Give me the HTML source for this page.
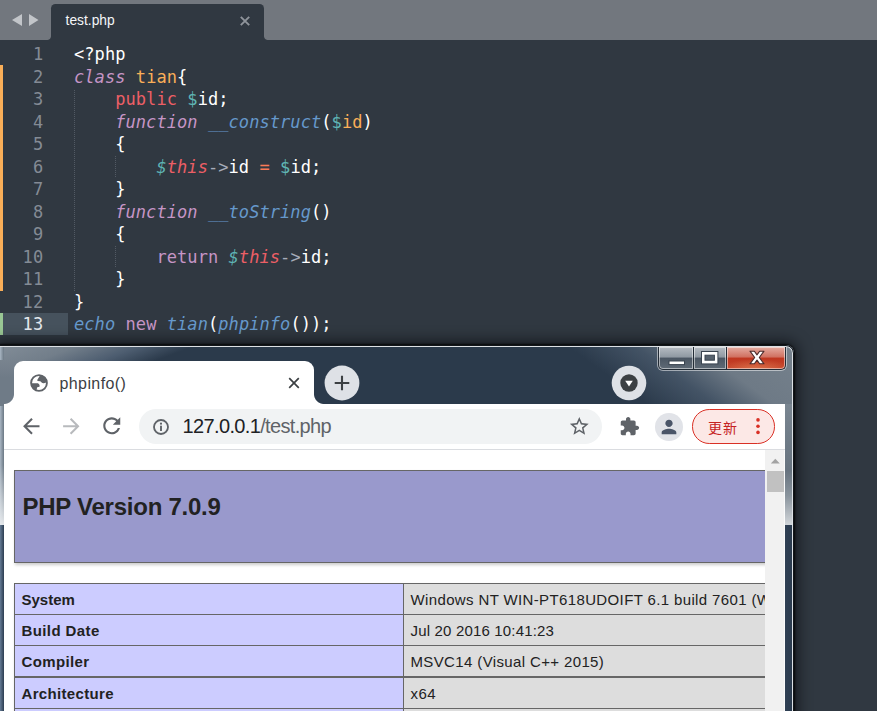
<!DOCTYPE html>
<html lang="zh">
<head>
<meta charset="utf-8">
<title>test.php</title>
<style>
*{box-sizing:border-box;margin:0;padding:0}
html,body{width:877px;height:711px;overflow:hidden;background:#303841}
body{position:relative;font-family:"Liberation Sans","Noto Sans CJK SC",sans-serif}
.abs{position:absolute}
/* ---------- editor ---------- */
#tabbar{position:absolute;left:0;top:0;width:877px;height:40px;background:#72777e}
#etab{position:absolute;left:51px;top:4px;width:213px;height:36px;background:#303841;border-radius:4.5px 4.5px 0 0}
#etab:before,#etab:after{content:"";position:absolute;bottom:0;width:4px;height:4px}
#etab:before{left:-4px;background:radial-gradient(circle at 0 0,rgba(48,56,65,0) 3.5px,#303841 4.5px)}
#etab:after{right:-4px;background:radial-gradient(circle at 100% 0,rgba(48,56,65,0) 3.5px,#303841 4.5px)}
#etab .t{position:absolute;left:14.6px;top:8.5px;font-size:13.8px;color:#f4f6f8;white-space:nowrap}
#code{position:absolute;left:0;top:43.3px;width:877px;font-family:"DejaVu Sans Mono","Liberation Mono",monospace;font-size:17px;letter-spacing:0.066px;color:#d8dee9}
.ln{position:relative;height:22.5px;line-height:22.5px;white-space:pre}
.ln .n{position:absolute;left:0;width:43.2px;text-align:right;color:#848b95}
.ln .c{position:absolute;left:74px}
.ln i{font-style:italic}
.k{color:#c695c6}.r{color:#ec5f66}.g{color:#5fb4b4}.o{color:#f9ae58}.b{color:#6699cc}.p{color:#d8dee9}.w{color:#ffffff}.m{color:#a6acb9}.op{color:#f97b58}
.guide{position:absolute;width:1px;background-image:linear-gradient(#525a64 50%,transparent 50%);background-size:1px 2px}
/* ---------- browser window ---------- */

#win{position:absolute;left:0;top:345px;width:794px;height:380px;border-radius:0 8px 0 0;overflow:hidden;box-shadow:0 0 2px 1px rgba(0,0,0,.8),0 0 14px 4px rgba(6,8,12,.62);
 background:
  linear-gradient(36deg,rgba(43,58,75,0) 0,rgba(43,58,75,0) 640px,rgba(70,86,104,.9) 680px,rgba(110,122,134,1) 715px,rgba(118,130,141,1) 780px) no-repeat,
  linear-gradient(159.6deg,#828d98 0,#727e8a 28px,#4d5d70 50px,#2b3a4b 69px);
}
#topline{position:absolute;left:-10px;top:0;width:804px;height:400px;border:1px solid #12161b;border-radius:0 8px 0 0;box-shadow:inset 0 0 0 1px #dde1e5;z-index:5}
#frameL{position:absolute;left:0;top:0;width:4px;height:380px;background:linear-gradient(90deg,#a9b6c3,#6b7884)}
#frameL2{position:absolute;left:0;top:120px;width:4px;height:60px;background:linear-gradient(rgba(230,233,236,0),rgba(233,236,239,.95))}
#frameL3{position:absolute;left:0;top:180px;width:4px;height:200px;background:linear-gradient(90deg,#657b95,#2c3d51)}
#frameR{position:absolute;left:785px;top:59px;width:8px;height:121px;background:linear-gradient(#7a8691 0,#67737f 55%,#8a949d 76%,#d2d6da 100%)}
#frameR3{position:absolute;left:785px;top:180px;width:8px;height:200px;background:linear-gradient(90deg,#2f4054,#2b3b4e)}
#btab{position:absolute;left:14px;top:16px;width:300px;height:43px;background:#fff;border-radius:9px 9px 0 0}
#btab:before,#btab:after{content:"";position:absolute;bottom:0;width:10px;height:10px}
#btab:before{left:-10px;background:radial-gradient(circle at 0 0,rgba(255,255,255,0) 9.5px,#fff 10.5px)}
#btab:after{right:-10px;background:radial-gradient(circle at 100% 0,rgba(255,255,255,0) 9.5px,#fff 10.5px)}
#btab .t{position:absolute;left:45.5px;top:13px;font-size:16px;letter-spacing:.4px;color:#3c4043;white-space:nowrap;line-height:20px}
#toolbar{position:absolute;left:4px;top:59px;width:781px;height:46px;background:#fff;border-bottom:1px solid #dadce0}
#omni{position:absolute;left:135px;top:5px;width:463px;height:34.5px;border-radius:17.25px;background:#f1f3f4}
#url{position:absolute;left:43.6px;top:6.2px;font-size:20px;letter-spacing:-.65px;line-height:22px;color:#5f6368;white-space:nowrap}
#url b{font-weight:normal;color:#202124}
#upd{position:absolute;left:688px;top:5px;width:83px;height:34.5px;border-radius:17.25px;background:#fce8e6;border:1.5px solid #d93025}
#upd .t{position:absolute;left:15px;top:7.8px;font-size:14px;letter-spacing:1px;line-height:20px;color:#c5221f;font-family:"Liberation Sans","Noto Sans CJK SC",sans-serif;white-space:nowrap}
#page{position:absolute;left:4px;top:105px;width:761px;height:280px;background:#fff;overflow:hidden}
#sbar{position:absolute;left:765px;top:105px;width:20px;height:280px;background:#f1f1f1;border-right:1px solid #fbfbfb}
#sbar .th{position:absolute;left:2px;top:21px;width:17px;height:21px;background:#c1c1c1}
#hdr{position:absolute;left:10px;top:20px;width:760px;height:92.6px;background:#99c;border:1px solid #666;box-shadow:1px 2px 3px #ccc}
#hdr h1{position:absolute;left:7.5px;top:21px;font-size:24px;line-height:30px;font-weight:bold;color:#222;letter-spacing:-.25px;white-space:nowrap}
#tbl{position:absolute;left:10px;top:133px;width:760px;height:160px;background:#666;box-shadow:1px 2px 3px #ccc}
.row{position:absolute;left:1px;width:760px}
.row .e{position:absolute;left:0;top:0;width:388px;height:100%;background:#ccf;font-weight:bold}
.row .v{position:absolute;left:389px;top:0;width:380px;height:100%;background:#ddd}
.row span{position:absolute;left:6.5px;top:5.8px;font-size:15px;line-height:20px;color:#222;white-space:nowrap}

#cap{position:absolute;left:657px;top:2px;width:130px;height:24px;background:rgba(255,255,255,.5);border-radius:0 0 6px 6px}
.cb{position:absolute;top:0;height:23px;border:1px solid #232c36;border-top:none;box-shadow:inset 0 0 0 1px rgba(255,255,255,.5);
 background:linear-gradient(#b6bcc3 0,#8f98a2 46%,#4b5663 50%,#5f6a76 100%)}
.cb.cx{background:radial-gradient(ellipse 60% 45% at 50% 100%,rgba(236,150,100,.55),rgba(236,150,100,0)),linear-gradient(#e5aca2 0,#d0705f 46%,#bf3720 50%,#c5442b 100%)}
</style>
</head>
<body>
<div id="tabbar">
  <svg class="abs" style="left:0;top:0" width="51" height="40"><path d="M12 20 L22 14 V26Z M38.5 20 L29 14 V26Z" fill="#c2c5c9"/></svg>
  <div id="etab"><span class="t">test.php</span>
    <svg class="abs" style="left:188.5px;top:11.5px" width="10" height="10"><path d="M0.8 0.8L9.2 9.2M9.2 0.8L0.8 9.2" stroke="#8f949b" stroke-width="1.9" fill="none"/></svg>
  </div>
</div>
<div class="abs" style="left:0;top:65px;width:3px;height:226px;background:#f9ae58"></div>
<div class="abs" style="left:0;top:313px;width:3px;height:22px;background:#99c794"></div>
<div class="abs" style="left:3px;top:313px;width:65px;height:22px;background:#46525d"></div>
<div class="guide" style="left:74px;top:90px;height:201px"></div>
<div class="guide" style="left:115px;top:156px;height:22px"></div>
<div class="guide" style="left:115px;top:246px;height:22px"></div>
<div id="code">
<div class="ln"><span class="n">1</span><span class="c w">&lt;?php</span></div>
<div class="ln"><span class="n">2</span><span class="c"><i class="k">class</i> <span class="o">tian</span><span class="w">{</span></span></div>
<div class="ln"><span class="n">3</span><span class="c">    <span class="r">public</span> <span class="g">$</span><span class="w">id;</span></span></div>
<div class="ln"><span class="n">4</span><span class="c">    <i class="k">function</i> <i class="b">__construct</i><span class="w">(</span><span class="g">$</span><span class="o">id</span><span class="w">)</span></span></div>
<div class="ln"><span class="n">5</span><span class="c w">    {</span></div>
<div class="ln"><span class="n">6</span><span class="c">        <i class="g">$</i><i class="r">this</i><span class="m">-&gt;</span><span class="w">id</span> <span class="op">=</span> <span class="g">$</span><span class="w">id;</span></span></div>
<div class="ln"><span class="n">7</span><span class="c w">    }</span></div>
<div class="ln"><span class="n">8</span><span class="c">    <i class="k">function</i> <i class="b">__toString</i><span class="w">()</span></span></div>
<div class="ln"><span class="n">9</span><span class="c w">    {</span></div>
<div class="ln"><span class="n">10</span><span class="c">        <span class="k">return</span> <i class="g">$</i><i class="r">this</i><span class="m">-&gt;</span><span class="w">id;</span></span></div>
<div class="ln"><span class="n">11</span><span class="c w">    }</span></div>
<div class="ln"><span class="n">12</span><span class="c w">}</span></div>
<div class="ln"><span class="n" style="color:#e4e8ee">13</span><span class="c"><i class="b">echo</i> <span class="k">new</span> <i class="b">tian</i><span class="w">(</span><i class="b">phpinfo</i><span class="w">());</span></span></div>
</div>
<div id="win">
  <div id="topline"></div><div id="frameL"></div><div id="frameL2"></div><div id="frameL3"></div><div id="frameR"></div><div id="frameR3"></div>
  <div id="cap">
    <div class="cb" style="left:1px;width:36px;border-radius:0 0 0 5px"><svg class="abs" style="left:9px;top:13px" width="18" height="6"><rect x="1" y="1" width="15.5" height="3.6" fill="#fff" stroke="#3a4450" stroke-width="1"/></svg></div>
    <div class="cb" style="left:36px;width:34px"><svg class="abs" style="left:5.5px;top:3px" width="20" height="17"><rect x="1" y="1" width="17.4" height="13.4" fill="#3a4450"/><rect x="2" y="2" width="15.4" height="11.4" fill="#fff"/><rect x="5" y="5.2" width="9.4" height="5" fill="#56616d" stroke="#3a4450" stroke-width="1"/></svg></div>
    <div class="cb cx" style="left:69px;width:60px;border-radius:0 0 5px 0"><svg class="abs" style="left:20.8px;top:2.4px" width="18" height="17" viewBox="0 0 18 17"><path d="M2 2.2H6.4L9 5.9L11.6 2.2H16L11.3 8.5L16 14.8H11.6L9 11.1L6.4 14.8H2L6.7 8.5Z" fill="#fff" stroke="#4a2a2a" stroke-width="1.1" stroke-linejoin="round"/></svg></div>
  </div>
  <div class="abs" style="left:0;top:15px;width:26px;height:46px;background:linear-gradient(#79848f 0,#6f7b87 18px)"></div>
  <div id="btab"><span class="t">phpinfo()</span>
    <svg class="abs" style="left:15px;top:12px" width="20" height="20" viewBox="0 0 20 20"><defs><clipPath id="gc"><circle cx="10" cy="10" r="8"/></clipPath></defs><circle cx="10" cy="10" r="7.9" fill="none" stroke="#5f6368" stroke-width="1.9"/><g clip-path="url(#gc)" fill="#5f6368"><path d="M11.3 2 L8.5 6.4 Q8 7.6 8.7 7.9 L11.2 8.2 Q12 8.6 12.6 9.6 Q13.5 10.5 14.9 10.3 L18.5 9.2 L19 2 Z"/><path d="M1 10.2 L8.8 10.2 Q10.2 10.8 10.5 12 L10.7 13.5 Q9.5 14.3 8.2 14.3 L7.7 16.3 L7 19 L1 19 Z"/></g></svg><svg class="abs" style="left:274.0px;top:15.5px" width="12" height="12"><path d="M1.2 1.2L10.8 10.8M10.8 1.2L1.2 10.8" stroke="#3c4043" stroke-width="1.7" fill="none"/></svg>
  </div>
  <svg class="abs" style="left:323.9px;top:20.0px" width="36" height="36"><circle cx="18" cy="18" r="17.4" fill="#dee1e6"/><path d="M10.7 18H25.3M18 10.7V25.3" stroke="#3c4043" stroke-width="2.1" fill="none"/></svg><svg class="abs" style="left:611.2px;top:19.6px" width="36" height="36"><circle cx="18" cy="18" r="17.3" fill="#dee1e6"/><circle cx="18" cy="18" r="8.7" fill="#3c4043"/><path d="M14.2 15.8H21.8L18 21.6Z" fill="#fff"/></svg>
  <div id="toolbar">
    <svg class="abs" style="left:15.20px;top:9.70px" width="24.6" height="24.6" viewBox="0 0 24 24"><path d="M20 11H7.83l5.59-5.59L12 4l-8 8 8 8 1.41-1.41L7.83 13H20v-2z" fill="#5f6368"/></svg><svg class="abs" style="left:55.10px;top:9.70px" width="24.6" height="24.6" viewBox="0 0 24 24"><path d="M12 4l-1.41 1.41L16.17 11H4v2h12.17l-5.58 5.59L12 20l8-8z" fill="#b8babd"/></svg><svg class="abs" style="left:95.25px;top:9.25px" width="25.5" height="25.5" viewBox="0 0 24 24"><path d="M17.65 6.35C16.2 4.9 14.21 4 12 4c-4.42 0-7.99 3.58-7.99 8s3.57 8 7.99 8c3.73 0 6.84-2.55 7.73-6h-2.08c-.82 2.33-3.04 4-5.65 4-3.31 0-6-2.69-6-6s2.69-6 6-6c1.66 0 3.14.69 4.22 1.78L13 11h7V4l-2.35 2.35z" fill="#5f6368"/></svg>
    <div id="omni"><span id="url"><b>127.0.0.1</b>/test.php</span><svg class="abs" style="left:12.4px;top:7.5px" width="20" height="20" viewBox="-10 -10 20 20"><circle cx="0" cy="0" r="7" fill="none" stroke="#5f6368" stroke-width="1.85"/><circle cx="0" cy="-3.3" r="1.1" fill="#5f6368"/><rect x="-0.95" y="-1.3" width="1.9" height="5.3" fill="#5f6368"/></svg><svg class="abs" style="left:428.80px;top:6.00px" width="22.6" height="22.6" viewBox="0 0 24 24"><path d="M22 9.24l-7.19-.62L12 2 9.19 8.63 2 9.24l5.46 4.73L5.82 21 12 17.27 18.18 21l-1.63-7.03L22 9.24zM12 15.4l-3.76 2.27 1-4.28-3.32-2.88 4.38-.38L12 6.1l1.71 4.04 4.38.38-3.32 2.88 1 4.28L12 15.4z" fill="#5f6368"/></svg></div>
    <svg class="abs" style="left:615.30px;top:11.50px" width="21" height="21" viewBox="0 0 24 24"><path d="M20.5 11H19V7c0-1.1-.9-2-2-2h-4V3.5C13 2.12 11.88 1 10.5 1S8 2.12 8 3.5V5H4c-1.1 0-1.99.9-1.99 2v3.8H3.5c1.49 0 2.7 1.21 2.7 2.7s-1.21 2.7-2.7 2.7H2V20c0 1.1.9 2 2 2h3.8v-1.5c0-1.49 1.21-2.7 2.7-2.7 1.49 0 2.7 1.21 2.7 2.7V22H17c1.1 0 2-.9 2-2v-4h1.5c1.38 0 2.5-1.12 2.5-2.5S21.88 11 20.5 11z" fill="#5f6368"/></svg><div class="abs" style="left:651.3px;top:8.5px;width:28px;height:28px;border-radius:14px;background:#e1e3e8"></div><svg class="abs" style="left:654.30px;top:11.50px" width="22" height="22" viewBox="0 0 24 24"><path d="M12 12c2.21 0 4-1.79 4-4s-1.79-4-4-4-4 1.79-4 4 1.79 4 4 4zm0 2c-2.67 0-8 1.34-8 4v2h16v-2c0-2.66-5.33-4-8-4z" fill="#4a5568"/></svg>
    <div id="upd"><span class="t">更新</span><svg class="abs" style="left:60.5px;top:5.0px" width="8" height="22"><circle cx="4" cy="4.9" r="1.8" fill="#d93025"/><circle cx="4" cy="11.2" r="1.8" fill="#d93025"/><circle cx="4" cy="17.4" r="1.8" fill="#d93025"/></svg></div>
  </div>
  <div id="page">
    <div id="hdr"><h1>PHP Version 7.0.9</h1></div>
    <div id="tbl">
      <div class="row" style="top:1px;height:30px"><div class="e"><span style="letter-spacing:0">System</span></div><div class="v"><span style="letter-spacing:.37px">Windows NT WIN-PT618UDOIFT 6.1 build 7601 (Wind</span></div></div>
      <div class="row" style="top:32px;height:30px"><div class="e"><span style="letter-spacing:.4px">Build Date</span></div><div class="v"><span style="letter-spacing:.17px">Jul 20 2016 10:41:23</span></div></div>
      <div class="row" style="top:63px;height:30px"><div class="e"><span style="letter-spacing:.38px">Compiler</span></div><div class="v"><span style="letter-spacing:.37px">MSVC14 (Visual C++ 2015)</span></div></div>
      <div class="row" style="top:95px;height:30px"><div class="e"><span style="letter-spacing:.33px">Architecture</span></div><div class="v"><span style="letter-spacing:.4px">x64</span></div></div>
      <div class="row" style="top:126px;height:30px"><div class="e"></div><div class="v"></div></div>
    </div>
  </div>
  <div id="sbar"><svg class="abs" style="left:0;top:0" width="20" height="20"><path d="M5.8 13.6 L10.3 8.7 L14.8 13.6Z" fill="#a3a3a3"/></svg><div class="th"></div></div>
</div>
</body>
</html>
